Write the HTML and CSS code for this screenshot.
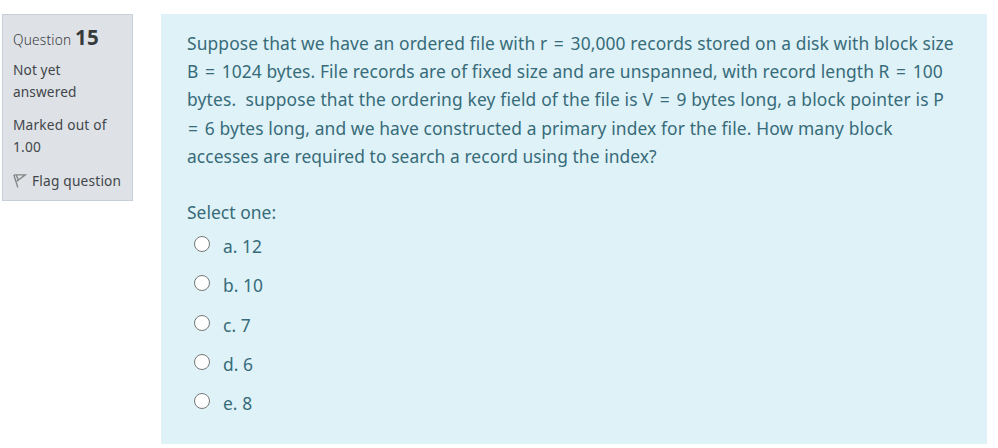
FILE: index.html
```html
<!DOCTYPE html>
<html lang="en">
<head>
<meta charset="utf-8">
<title>Question 15</title>
<link rel="stylesheet" href="styles.css">
</head>
<body>
<main class="question">
  <aside class="info">
    <h3 class="number"><span class="label">Question</span> <span class="qno">15</span></h3>
    <div class="state">Not yet<br>answered</div>
    <div class="grade">Marked out of<br>1.00</div>
    <div class="flag">
      <svg class="flag-icon" viewBox="0 0 14 16" width="14" height="16"><path d="M0.8 1.7 4.8 14.4M1.2 1.9H12.3L3.8 8.2M3.4 2.5 5.2 6.6" fill="none" stroke="#858585" stroke-width="1.4"/></svg>
      <span>Flag question</span>
    </div>
  </aside>
  <section class="content">
    <p class="text">
      <span class="line t1">Suppose that we have an ordered file with r <span class="eq">=</span> 30,000 records stored on a disk with block size</span>
      <span class="line t2">B <span class="eq">=</span> 1024 bytes. File records are of fixed size and are unspanned, with record length R <span class="eq">=</span> 100</span>
      <span class="line t3">bytes.&nbsp; suppose that the ordering key field of the file is V <span class="eq">=</span> 9 bytes long, a block pointer is P</span>
      <span class="line t4"><span class="eq">=</span> 6 bytes long, and we have constructed a primary index for the file. How many block</span>
      <span class="line t5">accesses are required to search a record using the index?</span>
    </p>
    <div class="prompt">Select one:</div>
    <div class="answers">
      <label class="answer"><input type="radio" name="answer"><span>a. 12</span></label>
      <label class="answer"><input type="radio" name="answer"><span>b. 10</span></label>
      <label class="answer"><input type="radio" name="answer"><span>c. 7</span></label>
      <label class="answer"><input type="radio" name="answer"><span>d. 6</span></label>
      <label class="answer"><input type="radio" name="answer"><span>e. 8</span></label>
    </div>
  </section>
</main>
</body>
</html>
```
FILE: styles.css
```css
* { box-sizing: border-box; }
body { margin: 0; background: #fff; font-family: "Segoe UI", "Noto Sans", sans-serif; }
.question { display: flex; align-items: flex-start; gap: 28px; padding: 14px 0 0 2px; }
.info { width: 131px; height: 187px; padding: 10px 0 0 10px; background: #dee2e6; border: 1px solid #c7cfd9; color: #42464a; font-size: 13.7px; line-height: 22.3px; letter-spacing: 0.2px; white-space: nowrap; }
.number { margin: 0; font-size: 13.7px; font-weight: 300; line-height: 25px; height: 34px; color: #373a3c; }
.qno { font-size: 20.5px; font-weight: 700; letter-spacing: 0.3px; }
.state { height: 55px; letter-spacing: 0.1px; }
.grade { height: 56px; }
.flag { display: flex; }
.flag-icon { margin: 3px 5px 0 0; flex: none; }
.content { width: 826px; height: 430px; padding: 15px 0 0 26px; background: #def2f8; color: #376b79; font-size: 17.4px; line-height: 28.2px; }
.text { margin: 0; height: 169px; }
.line { display: block; white-space: nowrap; width: max-content; }
.eq { margin: 0 2px; }
.t1 { letter-spacing: 0.12px; }
.t2 { letter-spacing: 0.09px; }
.t3 { letter-spacing: 0.15px; }
.t4 { letter-spacing: 0.12px; }
.t4 .eq { margin-left: 1px; }
.t5 { letter-spacing: 0.075px; }
.prompt { letter-spacing: 0.05px; }
.answers { margin-top: 6px; letter-spacing: 0.05px; }
.answer { display: flex; height: 39.25px; padding-left: 7px; }
.answer input { appearance: none; width: 16px; height: 16px; margin: 4px 13px 0 0; border: 1.3px solid #767676; border-radius: 50%; background: #fff; }
```
